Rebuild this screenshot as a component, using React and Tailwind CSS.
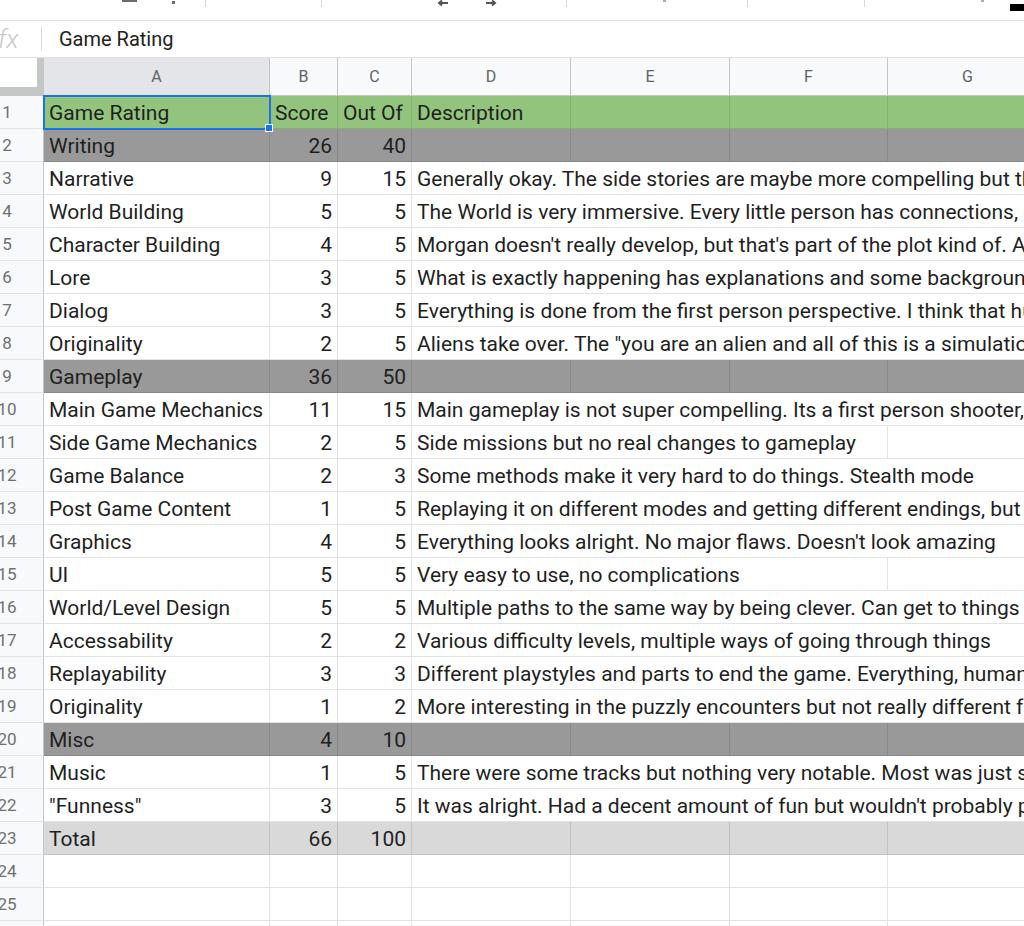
import React from 'react';

const rows = [
  { n: 1, kind: 'head', a: 'Game Rating', b: 'Score', c: 'Out Of', d: 'Description' },
  { n: 2, kind: 'group', a: 'Writing', b: '26', c: '40' },
  { n: 3, a: 'Narrative', b: '9', c: '15', d: 'Generally okay. The side stories are maybe more compelling but the main story is fine', span: 'all' },
  { n: 4, a: 'World Building', b: '5', c: '5', d: 'The World is very immersive. Every little person has connections, emails and a story', span: 'all' },
  { n: 5, a: 'Character Building', b: '4', c: '5', d: "Morgan doesn't really develop, but that's part of the plot kind of. Alex is interesting", span: 'all' },
  { n: 6, a: 'Lore', b: '3', c: '5', d: 'What is exactly happening has explanations and some background to it', span: 'all' },
  { n: 7, a: 'Dialog', b: '3', c: '5', d: 'Everything is done from the first person perspective. I think that hurts it a little', span: 'all' },
  { n: 8, a: 'Originality', b: '2', c: '5', d: 'Aliens take over. The "you are an alien and all of this is a simulation" twist', span: 'all' },
  { n: 9, kind: 'group', a: 'Gameplay', b: '36', c: '50' },
  { n: 10, a: 'Main Game Mechanics', b: '11', c: '15', d: 'Main gameplay is not super compelling. Its a first person shooter, with some powers', span: 'all' },
  { n: 11, a: 'Side Game Mechanics', b: '2', c: '5', d: 'Side missions but no real changes to gameplay', span: 'three' },
  { n: 12, a: 'Game Balance', b: '2', c: '3', d: 'Some methods make it very hard to do things. Stealth mode', span: 'all' },
  { n: 13, a: 'Post Game Content', b: '1', c: '5', d: 'Replaying it on different modes and getting different endings, but nothing new', span: 'all' },
  { n: 14, a: 'Graphics', b: '4', c: '5', d: "Everything looks alright. No major flaws. Doesn't look amazing", span: 'all' },
  { n: 15, a: 'UI', b: '5', c: '5', d: 'Very easy to use, no complications', span: 'three' },
  { n: 16, a: 'World/Level Design', b: '5', c: '5', d: 'Multiple paths to the same way by being clever. Can get to things early', span: 'all' },
  { n: 17, a: 'Accessability', b: '2', c: '2', d: 'Various difficulty levels, multiple ways of going through things', span: 'all' },
  { n: 18, a: 'Replayability', b: '3', c: '3', d: 'Different playstyles and parts to end the game. Everything, human or not', span: 'all' },
  { n: 19, a: 'Originality', b: '1', c: '2', d: 'More interesting in the puzzly encounters but not really different from others', span: 'all' },
  { n: 20, kind: 'group', a: 'Misc', b: '4', c: '10' },
  { n: 21, a: 'Music', b: '1', c: '5', d: 'There were some tracks but nothing very notable. Most was just silence', span: 'all' },
  { n: 22, a: '"Funness"', b: '3', c: '5', d: "It was alright. Had a decent amount of fun but wouldn't probably play again", span: 'all' },
  { n: 23, kind: 'total', a: 'Total', b: '66', c: '100' },
  { n: 24 },
  { n: 25 },
  { n: 26 },
];

function RowHead({ n }) {
  return (
    <div className="w-[44px] shrink-0 h-full flex items-center border-r border-b border-r-[#c4c7c5] border-b-[#e2e3e3] bg-[#f8f9fa] overflow-hidden">
      <span className="w-[30px] -ml-[8px] pt-[1px] text-center text-[17px] text-[#707070]">{n}</span>
    </div>
  );
}

function SheetRow({ row }) {
  const fill =
    row.kind === 'head' ? 'bg-[#93c47d]' :
    row.kind === 'group' ? 'bg-[#999999]' :
    row.kind === 'total' ? 'bg-[#d9d9d9]' : 'bg-white';
  const line = row.kind ? 'border-black/10' : 'border-[#e2e3e3]';
  const cell = `h-full shrink-0 flex items-center pt-[2px] border-r border-b ${line} overflow-hidden whitespace-nowrap`;
  const isHead = row.kind === 'head';

  return (
    <div className="flex h-[33px]">
      <RowHead n={row.n} />
      <div className={`flex h-full ${fill}`}>
        {/* A */}
        <div className={`${cell} w-[226px] px-[5px]`}>{row.a}</div>
        {/* B, C */}
        <div className={`${cell} w-[68px] px-[5px] ${isHead ? 'justify-start' : 'justify-end'}`}>{row.b}</div>
        <div className={`${cell} w-[74px] px-[5px] ${isHead ? 'justify-start' : 'justify-end'}`}>{row.c}</div>
        {/* D..G, long text spills over empty neighbours */}
        {row.span === 'all' && <div className={`${cell} w-[636px] px-[5px]`}>{row.d}</div>}
        {row.span === 'three' && (
          <>
            <div className={`${cell} w-[476px] px-[5px]`}>{row.d}</div>
            <div className={`${cell} w-[160px]`} />
          </>
        )}
        {!row.span && (
          <>
            <div className={`${cell} w-[159px] px-[5px]`}>{row.d}</div>
            <div className={`${cell} w-[159px]`} />
            <div className={`${cell} w-[158px]`} />
            <div className={`${cell} w-[160px]`} />
          </>
        )}
      </div>
    </div>
  );
}

function ColHeads() {
  const heads = [
    { k: 'A', w: 'w-[226px] bg-[#e3e5e8]' },
    { k: 'B', w: 'w-[68px] bg-[#f8f9fa]' },
    { k: 'C', w: 'w-[74px] bg-[#f8f9fa]' },
    { k: 'D', w: 'w-[159px] bg-[#f8f9fa]' },
    { k: 'E', w: 'w-[159px] bg-[#f8f9fa]' },
    { k: 'F', w: 'w-[158px] bg-[#f8f9fa]' },
    { k: 'G', w: 'w-[160px] bg-[#f8f9fa]' },
  ];
  return (
    <div className="flex h-[38px] border-b border-[#c4c7c5]">
      {/* corner with freeze bars */}
      <div className="w-[44px] shrink-0 flex">
        <div className="w-[37px] flex flex-col">
          <div className="flex-1 bg-white" />
          <div className="h-[8px] bg-[#c4c7c5]" />
        </div>
        <div className="w-[7px] bg-[#c4c7c5]" />
      </div>
      {heads.map((h) => (
        <div key={h.k} className={`${h.w} shrink-0 flex items-center justify-center border-r border-[#c4c7c5] text-[16px] text-[#5f6368]`}>
          {h.k}
        </div>
      ))}
    </div>
  );
}

function Toolbar() {
  return (
    <div className="h-[21px] border-b border-[#e0e0e0] flex items-start text-[#5f6368]">
      <div className="w-[122px]" />
      <div className="w-[15px] h-[2px] bg-[#6b6b6b]" />
      <div className="w-[35px]" />
      <div className="w-[3px] h-[3px] bg-[#6b6b6b] mt-[1px]" />
      <div className="w-[30px]" />
      <div className="w-px h-[7px] bg-[#d6d6d6]" />
      <div className="w-[115px]" />
      <div className="w-px h-[7px] bg-[#d6d6d6]" />
      <div className="w-[115px]" />
      <svg width="12" height="8" viewBox="0 0 12 8">
        <path d="M11 3H3M5 0.5 2 3l3 2.5" stroke="#555" strokeWidth="2" fill="none" />
      </svg>
      <div className="w-[36px]" />
      <svg width="12" height="8" viewBox="0 0 12 8">
        <path d="M1 3h8M7 0.5 10 3 7 5.5" stroke="#555" strokeWidth="2" fill="none" />
      </svg>
      <div className="w-[69px]" />
      <div className="w-px h-[7px] bg-[#d6d6d6]" />
      <div className="w-[96px]" />
      <div className="w-[3px] h-[2px] bg-[#aaa]" />
      <div className="w-[81px]" />
      <div className="w-px h-[7px] bg-[#d6d6d6]" />
      <div className="w-[116px]" />
      <div className="w-px h-[7px] bg-[#d6d6d6]" />
      <div className="w-[116px]" />
      <div className="w-[3px] h-[2px] bg-[#aaa]" />
      <div className="w-[26px]" />
      <div className="w-[14px] h-[7px] bg-black mt-[4px]" />
    </div>
  );
}

export default function App() {
  return (
    <div className="w-[1024px] h-[926px] overflow-hidden bg-white font-[Roboto,sans-serif] text-[#1f1f1f]">
      <Toolbar />

      {/* formula bar */}
      <div className="h-[37px] flex items-center border-b border-[#e0e0e0]">
        <span className="w-[43px] -ml-[2px] text-[26px] italic font-light text-[#c8c8c8] leading-none">fx</span>
        <div className="w-px h-[24px] bg-[#dcdcdc]" />
        <span className="ml-[17px] text-[20px] text-[#222]">Game Rating</span>
      </div>

      <ColHeads />

      <div className="relative text-[21px] leading-none">
        {rows.map((r) => (
          <SheetRow key={r.n} row={r} />
        ))}
        {/* active cell outline + fill handle */}
        <div className="absolute left-[43px] top-[-1px] w-[228px] h-[35px] border-2 border-[#1a73e8] pointer-events-none" />
        <div className="absolute left-[265px] top-[28px] w-[8px] h-[8px] bg-[#1a73e8] border border-white" />
      </div>
    </div>
  );
}
